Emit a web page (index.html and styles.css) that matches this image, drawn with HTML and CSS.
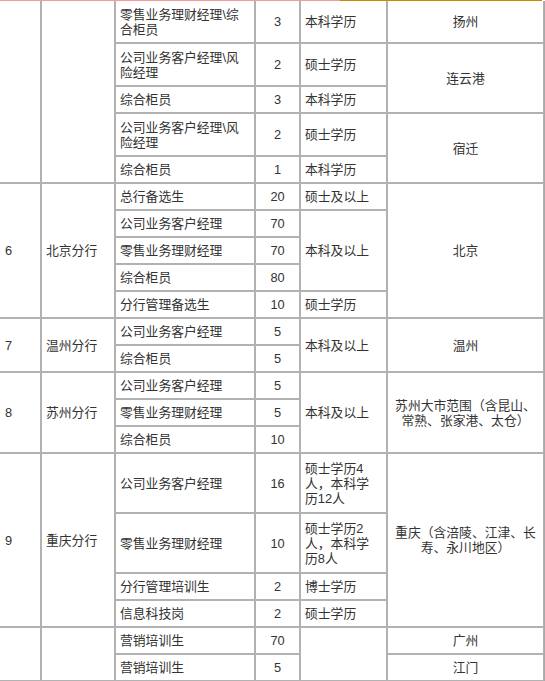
FILE: index.html
```html
<!DOCTYPE html>
<html lang="zh-CN">
<head>
<meta charset="utf-8">
<title>招聘岗位</title>
<link rel="stylesheet" href="styles.css">
</head>
<body>
<div class="strip"><span class="pink"></span><span class="orange"></span></div>
<table class="jobs">
<colgroup><col class="w1"><col class="w2"><col class="w3"><col class="w4"><col class="w5"><col class="w6"></colgroup>
<tbody>
<tr class="first h42"><td class="c1" rowspan="5"></td><td rowspan="5"></td><td>零售业务理财经理\综<br>合柜员</td><td class="num">3</td><td>本科学历</td><td class="loc">扬州</td></tr>
<tr class="h43"><td>公司业务客户经理\风<br>险经理</td><td class="num">2</td><td>硕士学历</td><td class="loc" rowspan="2">连云港</td></tr>
<tr><td>综合柜员</td><td class="num">3</td><td>本科学历</td></tr>
<tr class="h43"><td>公司业务客户经理\风<br>险经理</td><td class="num">2</td><td>硕士学历</td><td class="loc" rowspan="2">宿迁</td></tr>
<tr><td>综合柜员</td><td class="num">1</td><td>本科学历</td></tr>

<tr><td class="c1" rowspan="5">6</td><td rowspan="5">北京分行</td><td>总行备选生</td><td class="num">20</td><td>硕士及以上</td><td class="loc" rowspan="5">北京</td></tr>
<tr><td>公司业务客户经理</td><td class="num">70</td><td rowspan="3">本科及以上</td></tr>
<tr><td>零售业务理财经理</td><td class="num">70</td></tr>
<tr><td>综合柜员</td><td class="num">80</td></tr>
<tr><td>分行管理备选生</td><td class="num">10</td><td>硕士学历</td></tr>

<tr><td class="c1" rowspan="2">7</td><td rowspan="2">温州分行</td><td>公司业务客户经理</td><td class="num">5</td><td rowspan="2">本科及以上</td><td class="loc" rowspan="2">温州</td></tr>
<tr><td>综合柜员</td><td class="num">5</td></tr>

<tr><td class="c1" rowspan="3">8</td><td rowspan="3">苏州分行</td><td>公司业务客户经理</td><td class="num">5</td><td rowspan="3">本科及以上</td><td class="loc nw" rowspan="3">苏州大市范围（含昆山、<br>常熟、张家港、太仓）</td></tr>
<tr><td>零售业务理财经理</td><td class="num">5</td></tr>
<tr><td>综合柜员</td><td class="num">10</td></tr>

<tr class="h60"><td class="c1" rowspan="4">9</td><td rowspan="4">重庆分行</td><td>公司业务客户经理</td><td class="num">16</td><td>硕士学历4<br>人，本科学<br>历12人</td><td class="loc nw" rowspan="4">重庆（含涪陵、江津、长<br>寿、永川地区）</td></tr>
<tr class="h60"><td>零售业务理财经理</td><td class="num">10</td><td>硕士学历2<br>人，本科学<br>历8人</td></tr>
<tr><td>分行管理培训生</td><td class="num">2</td><td>博士学历</td></tr>
<tr><td>信息科技岗</td><td class="num">2</td><td>硕士学历</td></tr>

<tr><td class="c1" rowspan="2"></td><td rowspan="2"></td><td>营销培训生</td><td class="num">70</td><td rowspan="2"></td><td class="loc">广州</td></tr>
<tr><td>营销培训生</td><td class="num">5</td><td class="loc">江门</td></tr>
</tbody>
</table>
</body>
</html>
```
FILE: styles.css
```css
html, body {
  margin: 0;
  padding: 0;
  background: #fff;
}
body {
  overflow: hidden;
}
.strip {
  display: flex;
  height: 1px;
}
.pink {
  width: 340px;
  background: #f7999a;
}
.orange {
  width: 202px;
  background: #c98a00;
}
.jobs {
  border-collapse: separate;
  border-spacing: 0;
  table-layout: fixed;
  width: 547px;
  margin-left: -2px;
  border: 1px solid #a9a9a9;
  border-top: none;
  font-family: "Liberation Sans", "Noto Sans CJK SC", sans-serif;
  font-size: 12.8px;
  line-height: 15px;
  color: #333;
}
.w1 { width: 42px; }
.w2 { width: 74px; }
.w3 { width: 140px; }
.w4 { width: 45px; }
.w5 { width: 87px; }
.w6 { width: 157px; }
.jobs td {
  border: 1px solid #b2b2b2;
  padding: 5px 4px;
  text-align: left;
  vertical-align: middle;
  white-space: nowrap;
  overflow: hidden;
}
.jobs .first td {
  border-top: none;
}
.jobs td.c1 {
  padding-left: 5px;
}
.jobs td.num,
.jobs td.loc {
  text-align: center;
}
.h42 { height: 42px; }
.h43 { height: 43px; }
.h60 { height: 60px; }
```
